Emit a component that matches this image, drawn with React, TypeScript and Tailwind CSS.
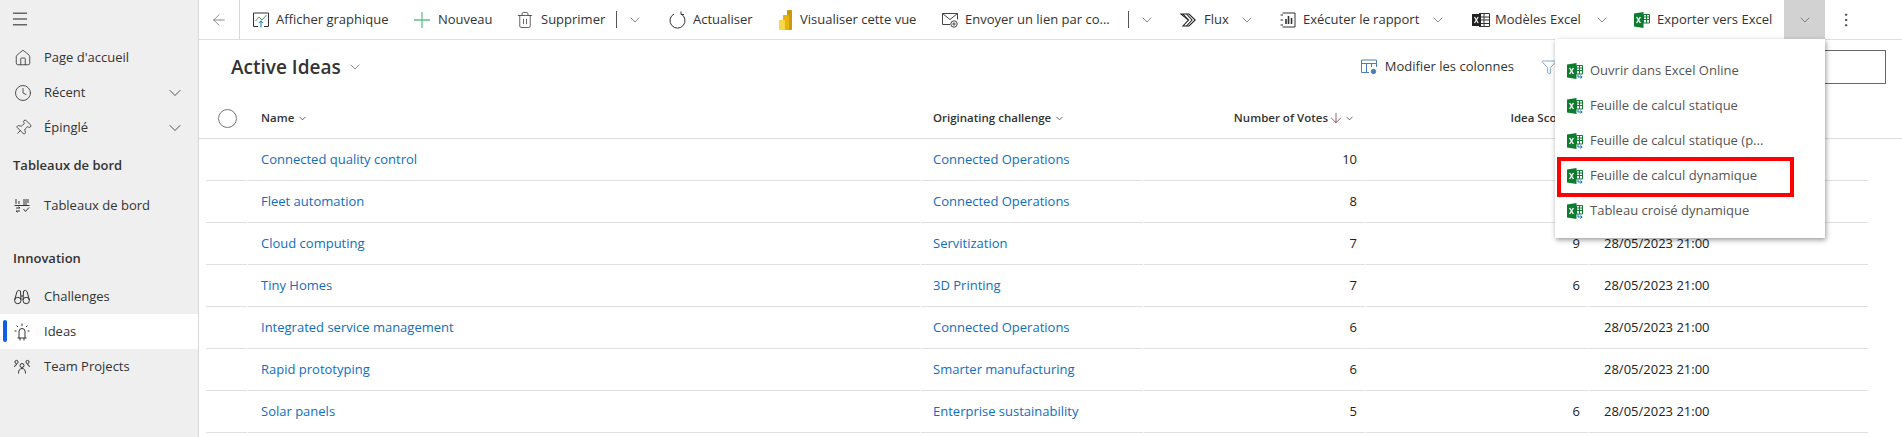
import { ChevronDown, Menu, Trash2, ArrowLeft, Home, Clock, Pin, ArrowDown, MoreVertical, Filter } from "lucide-react";
import type { ReactNode } from "react";

const linkColor = "text-[#106ebe]";

function ExcelIcon({ arrow = false }: { arrow?: boolean }) {
  return (
    <svg width="16" height="16" viewBox="0 0 16 16" className="shrink-0">
      <path d="M0 1.5 L9.5 0 V16 L0 14.5 Z" fill="#0e7c2f" />
      <path d="M2.6 5 L6.4 11 M6.4 5 L2.6 11" stroke="#fff" strokeWidth="1.4" />
      <path d="M9.5 2.5 H15.5 V11 H9.5 Z" fill="#fff" stroke="#0e7c2f" strokeWidth="1" />
      <path d="M9.5 5 H15.5 M9.5 7.5 H15.5 M12.5 2.5 V11" stroke="#0e7c2f" strokeWidth="1" />
      {arrow && <path d="M11 11.5 V14 H15 M13.5 12.5 L15.2 14 L13.5 15.5" stroke="#0f6cbd" strokeWidth="1" fill="none" />}
    </svg>
  );
}

function ChartIcon() {
  return (
    <svg width="16" height="16" viewBox="0 0 16 16" fill="none" className="shrink-0">
      <path d="M5 14.5 H0.5 V1 H15.5 V14.5 H11" stroke="#333" />
      <path d="M2.5 9 L6 5 L9 8 L13.5 3" stroke="#3aa655" />
      <path d="M8 15.5 V9 M5.8 11 L8 8.8 L10.2 11" stroke="#106ebe" />
    </svg>
  );
}

function PlusIcon() {
  return (
    <svg width="16" height="16" viewBox="0 0 16 16" fill="none" stroke="#62c08a" strokeWidth="1.3" className="shrink-0">
      <path d="M8 0 V16 M0 8 H16" />
    </svg>
  );
}

function RefreshIcon() {
  return (
    <svg width="17" height="18" viewBox="0 0 17 18" fill="none" stroke="#333" className="shrink-0">
      <path d="M5 3 A7.5 7.5 0 1 0 12 3" />
      <path d="M12 0.5 V3.5 H15" />
    </svg>
  );
}

function PowerBiIcon() {
  return (
    <svg width="13" height="20" viewBox="0 0 13 20" className="shrink-0">
      <rect x="8" y="0" width="5" height="20" rx="0.8" fill="#c99a06" />
      <rect x="4" y="5" width="6" height="15" rx="0.8" fill="#eab308" />
      <rect x="0" y="10" width="6" height="10" rx="0.8" fill="#f7d84a" />
    </svg>
  );
}

function MailLinkIcon() {
  return (
    <svg width="16" height="16" viewBox="0 0 16 16" fill="none" stroke="#444" className="shrink-0">
      <path d="M8 12.5 H0.5 V1.5 H15.5 V7.5" />
      <path d="M0.5 1.5 L8 7.5 L15.5 1.5" />
      <circle cx="12" cy="12" r="3.2" />
      <circle cx="12" cy="12" r="1.1" />
    </svg>
  );
}

function FlowIcon() {
  return (
    <svg width="16" height="16" viewBox="0 0 16 16" fill="none" stroke="#222" strokeWidth="1.1" className="shrink-0">
      <path d="M0.8 2 H9 L15.2 8 L9 14 H3 L8.5 8 Z" />
      <path d="M3 2 L8.5 8" />
      <path d="M6.5 2 L12 8 L6.5 14" />
    </svg>
  );
}

function ReportIcon() {
  return (
    <svg width="16" height="16" viewBox="0 0 16 16" fill="none" stroke="#333" className="shrink-0">
      <path d="M2.5 1 H15 V15 H2.5" />
      <path d="M6 12 V7 M8.5 12 V4 M11.5 12 V6" strokeWidth="1.6" />
      <path d="M0.5 3 H3 M0.5 8 H3 M0.5 13 H3" />
    </svg>
  );
}

function TemplateIcon() {
  return (
    <svg width="18" height="16" viewBox="0 0 18 16" className="shrink-0">
      <path d="M7 1.5 H17.5 V14.5 H7" fill="none" stroke="#333" />
      <path d="M7 5 H17.5 M7 8 H17.5 M7 11.5 H17.5 M12 1.5 V14.5" stroke="#333" />
      <rect x="0" y="2" width="9" height="12" fill="#222" />
      <path d="M2.5 5 L6.2 11 M6.2 5 L2.5 11" stroke="#fff" strokeWidth="1.2" />
    </svg>
  );
}

function ColumnsIcon() {
  return (
    <svg width="16" height="16" viewBox="0 0 16 16" fill="none" stroke="#4a7fb5" className="shrink-0">
      <path d="M8 13.5 H0.5 V1 H15.5 V8" />
      <path d="M0.5 4.5 H15.5 M5.5 4.5 V13.5 M10.5 4.5 V8" />
      <circle cx="12.5" cy="12.5" r="2.2" fill="#4a7fb5" />
    </svg>
  );
}

function DashboardIcon() {
  return (
    <svg width="16" height="16" viewBox="0 0 16 16" fill="none" stroke="#333" className="shrink-0">
      <path d="M2 1 V6 M5 3 V6 M0.5 7.5 H15.5 M9 2 H15 M9 4 H15 M9 6 H13" />
      <path d="M2 10 H6 L4.5 8.7 M6 13 H2 L3.5 14.3 M9.5 11 L11.5 13.5 L15 9.5" />
    </svg>
  );
}

function BinocularsIcon() {
  return (
    <svg width="16" height="16" viewBox="0 0 16 16" fill="none" stroke="#333" className="shrink-0">
      <circle cx="3.8" cy="11.5" r="3.2" />
      <circle cx="12.2" cy="11.5" r="3.2" />
      <path d="M0.6 11 L3 2.5 Q4.5 0.5 6.5 2 L7 11 M15.4 11 L13 2.5 Q11.5 0.5 9.5 2 L9 11 M7 7 H9" />
    </svg>
  );
}

function BulbIcon() {
  return (
    <svg width="16" height="18" viewBox="0 0 16 18" fill="none" stroke="#333" className="shrink-0">
      <path d="M5 15 V8.5 A3 3 0 0 1 11 8.5 V15 M3.5 15 H12.5 M6 15 V17.5 M10 15 V17.5" />
      <path d="M8 0.5 V3 M2.5 2.5 L4 4 M13.5 2.5 L12 4 M0.5 8 H2.5 M13.5 8 H15.5" />
    </svg>
  );
}

function TeamIcon() {
  return (
    <svg width="16" height="16" viewBox="0 0 16 16" fill="none" stroke="#333" className="shrink-0">
      <circle cx="2.5" cy="3" r="1.6" />
      <circle cx="13.5" cy="3" r="1.6" />
      <circle cx="8" cy="6.5" r="2" />
      <path d="M4.5 14.5 Q4.5 9.5 8 9.5 Q11.5 9.5 11.5 14.5 M0.5 8 Q0.8 5.5 3 5.5 M15.5 8 Q15.2 5.5 13 5.5" />
    </svg>
  );
}

function SideItem({ icon, label, chevron, active }: { icon: ReactNode; label: string; chevron?: boolean; active?: boolean }) {
  return (
    <div className={`relative flex h-[35px] items-center pl-[14px] pr-[13px] text-[13px] text-[#333] ${active ? "bg-white" : ""}`}>
      {active && <span className="absolute left-[3px] top-[6px] h-[22px] w-[4px] rounded-sm bg-[#0f5fe6]" />}
      <span className="flex w-[30px] shrink-0 items-center">{icon}</span>
      <span className="flex-1">{label}</span>
      {chevron && <ChevronDown size={20} strokeWidth={1} className="text-[#333]" />}
    </div>
  );
}

function ToolButton({ icon, label, className }: { icon: ReactNode; label: string; className: string }) {
  return (
    <div className={`flex h-full shrink-0 items-center whitespace-nowrap text-[13px] text-[#333] ${className}`}>
      {icon}
      <span className="pt-[1px]">{label}</span>
    </div>
  );
}

function ToolChevron({ className }: { className: string }) {
  return (
    <div className={`flex h-full shrink-0 items-center justify-center ${className}`}>
      <ChevronDown size={16} strokeWidth={1} className="text-[#555]" />
    </div>
  );
}

function Sep() {
  return <div className="h-[17px] w-px shrink-0 bg-[#555]" />;
}

function HeadChevron() {
  return <ChevronDown size={11} strokeWidth={1.6} className="shrink-0" />;
}

const ideas = [
  { name: "Connected quality control", challenge: "Connected Operations", votes: 10, score: "", date: "" },
  { name: "Fleet automation", challenge: "Connected Operations", votes: 8, score: "", date: "" },
  { name: "Cloud computing", challenge: "Servitization", votes: 7, score: "9", date: "28/05/2023 21:00" },
  { name: "Tiny Homes", challenge: "3D Printing", votes: 7, score: "6", date: "28/05/2023 21:00" },
  { name: "Integrated service management", challenge: "Connected Operations", votes: 6, score: "", date: "28/05/2023 21:00" },
  { name: "Rapid prototyping", challenge: "Smarter manufacturing", votes: 6, score: "", date: "28/05/2023 21:00" },
  { name: "Solar panels", challenge: "Enterprise sustainability", votes: 5, score: "6", date: "28/05/2023 21:00" },
];

const exportOptions = [
  "Ouvrir dans Excel Online",
  "Feuille de calcul statique",
  "Feuille de calcul statique (p...",
  "Feuille de calcul dynamique",
  "Tableau croisé dynamique",
];

const cols = "grid grid-cols-[41px_672px_222px_221px_222px_279px] gap-x-px";

export default function App() {
  return (
    <div className="flex h-[437px] w-[1902px] overflow-hidden bg-white font-['Open_Sans','Noto_Sans',sans-serif]">
      <aside className="w-[199px] shrink-0 border-r border-[#d8d8d8] bg-[#efefef]">
        <div className="flex h-[37px] items-center pl-[10px]">
          <Menu size={20} strokeWidth={1.2} className="text-[#222]" />
        </div>
        <div className="mt-[3px]">
          <SideItem icon={<Home size={18} strokeWidth={1.1} />} label="Page d'accueil" />
          <SideItem icon={<Clock size={18} strokeWidth={1.1} />} label="Récent" chevron />
          <SideItem icon={<Pin size={18} strokeWidth={1.1} className="rotate-45" />} label="Épinglé" chevron />
        </div>
        <div className="mt-[3px] flex h-[35px] items-center pl-[13px] text-[13px] font-semibold text-[#333]">Tableaux de bord</div>
        <div className="mt-[5px]">
          <SideItem icon={<DashboardIcon />} label="Tableaux de bord" />
        </div>
        <div className="mt-[18px] flex h-[35px] items-center pl-[13px] text-[13px] font-semibold text-[#333]">Innovation</div>
        <div className="mt-[3px]">
          <SideItem icon={<BinocularsIcon />} label="Challenges" />
          <SideItem icon={<BulbIcon />} label="Ideas" active />
          <SideItem icon={<TeamIcon />} label="Team Projects" />
        </div>
      </aside>

      <main className="relative min-w-0 flex-1">
        <div className="flex h-[40px] items-center border-b border-[#dedede]">
          <div className="flex h-full w-[41px] shrink-0 items-center justify-center border-r border-[#d8d8d8]">
            <ArrowLeft size={18} strokeWidth={1} className="text-[#666]" />
          </div>
          <ToolButton className="w-[162px] gap-[7px] pl-[13px]" icon={<ChartIcon />} label="Afficher graphique" />
          <ToolButton className="w-[103px] gap-[8px] pl-[12px]" icon={<PlusIcon />} label="Nouveau" />
          <ToolButton className="w-[111px] gap-[7px] pl-[11px]" icon={<Trash2 size={18} strokeWidth={1} />} label="Supprimer" />
          <Sep />
          <ToolChevron className="w-[36px]" />
          <ToolButton className="w-[126px] gap-[7px] pl-[16px]" icon={<RefreshIcon />} label="Actualiser" />
          <ToolButton className="w-[163px] gap-[8px]" icon={<PowerBiIcon />} label="Visualiser cette vue" />
          <ToolButton className="w-[186px] gap-[7px]" icon={<MailLinkIcon />} label="Envoyer un lien par co..." />
          <Sep />
          <ToolChevron className="w-[36px]" />
          <ToolButton className="w-[72px] gap-[8px] pl-[15px]" icon={<FlowIcon />} label="Flux" />
          <ToolChevron className="w-[20px]" />
          <ToolButton className="w-[171px] gap-[7px] pl-[23px]" icon={<ReportIcon />} label="Exécuter le rapport" />
          <ToolChevron className="w-[20px]" />
          <ToolButton className="w-[144px] gap-[5px] pl-[24px]" icon={<TemplateIcon />} label="Modèles Excel" />
          <ToolChevron className="w-[20px]" />
          <ToolButton className="w-[172px] gap-[7px] pl-[22px]" icon={<ExcelIcon />} label="Exporter vers Excel" />
          <div className="flex h-[39px] w-[41px] shrink-0 items-center justify-center bg-[#d2d2d2]">
            <ChevronDown size={16} strokeWidth={1} className="text-[#555]" />
          </div>
          <div className="flex w-[42px] shrink-0 items-center justify-center">
            <MoreVertical size={18} strokeWidth={1.2} className="text-[#333]" />
          </div>
        </div>

        <div className="flex h-[58px] items-center pb-[4px] pl-[32px] pr-[16px]">
          <span className="pt-[1px] text-[19px] font-semibold text-[#333]">Active Ideas</span>
          <ChevronDown size={16} strokeWidth={1} className="ml-[6px] text-[#555]" />
          <div className="ml-auto flex items-center gap-[8px] text-[13px] text-[#333]">
            <ColumnsIcon />
            <span>Modifier les colonnes</span>
          </div>
          <Filter size={16} strokeWidth={1} className="ml-[27px] text-[#4a7fb5]" />
          <div className="ml-[29px] h-[34px] w-[300px] border border-[#666]" />
        </div>

        <div className="border-b border-[#dedede] pl-[7px]">
          <div className={`${cols} h-[40px] items-center text-[11.5px] font-semibold text-[#333]`}>
            <div className="flex justify-center pl-[1px]">
              <div className="size-[19px] rounded-full border border-[#777]" />
            </div>
            <div className="flex items-center gap-[3px] pl-[13px]">
              Name <HeadChevron />
            </div>
            <div className="flex items-center gap-[3px] pl-[12px]">
              Originating challenge <HeadChevron />
            </div>
            <div className="flex items-center justify-end pr-[10px]">
              Number of Votes <ArrowDown size={16} strokeWidth={1.2} className="text-[#7a3b58]" /> <HeadChevron />
            </div>
            <div className="flex items-center justify-end gap-[3px] pr-[6px]">
              Idea Score <HeadChevron />
            </div>
            <div />
          </div>
        </div>

        <div className="pr-[34px] pl-[7px]">
          {ideas.map((idea) => (
            <div key={idea.name} className={`${cols} h-[42px] text-[13px]`}>
              <div className="border-b border-[#e0e0e0]" />
              <div className={`flex items-center border-b border-[#e0e0e0] pl-[13px] pt-[1px] ${linkColor}`}>{idea.name}</div>
              <div className={`flex items-center border-b border-[#e0e0e0] pl-[12px] pt-[1px] ${linkColor}`}>{idea.challenge}</div>
              <div className="flex items-center justify-end border-b border-[#e0e0e0] pr-[8px] pt-[1px] text-[#222]">{idea.votes}</div>
              <div className="flex items-center justify-end border-b border-[#e0e0e0] pr-[8px] pt-[1px] text-[#222]">{idea.score}</div>
              <div className="flex items-center border-b border-[#e0e0e0] pl-[15px] pt-[1px] text-[#222]">{idea.date}</div>
            </div>
          ))}
        </div>

        {/* export dropdown */}
        <div className="absolute left-[1356px] top-[39px] h-[199px] w-[270px] bg-white pt-[14px] pl-[12px] shadow-[1px_2px_5px_rgba(0,0,0,0.4)]">
          {exportOptions.map((label) => (
            <div key={label} className="flex h-[35px] items-center gap-[7px] text-[13px] text-[#555]">
              <ExcelIcon arrow />
              <span>{label}</span>
            </div>
          ))}
        </div>
        <div className="absolute left-[1358px] top-[157px] h-[40px] w-[237px] border-4 border-[#ff0000]" />
      </main>
    </div>
  );
}
